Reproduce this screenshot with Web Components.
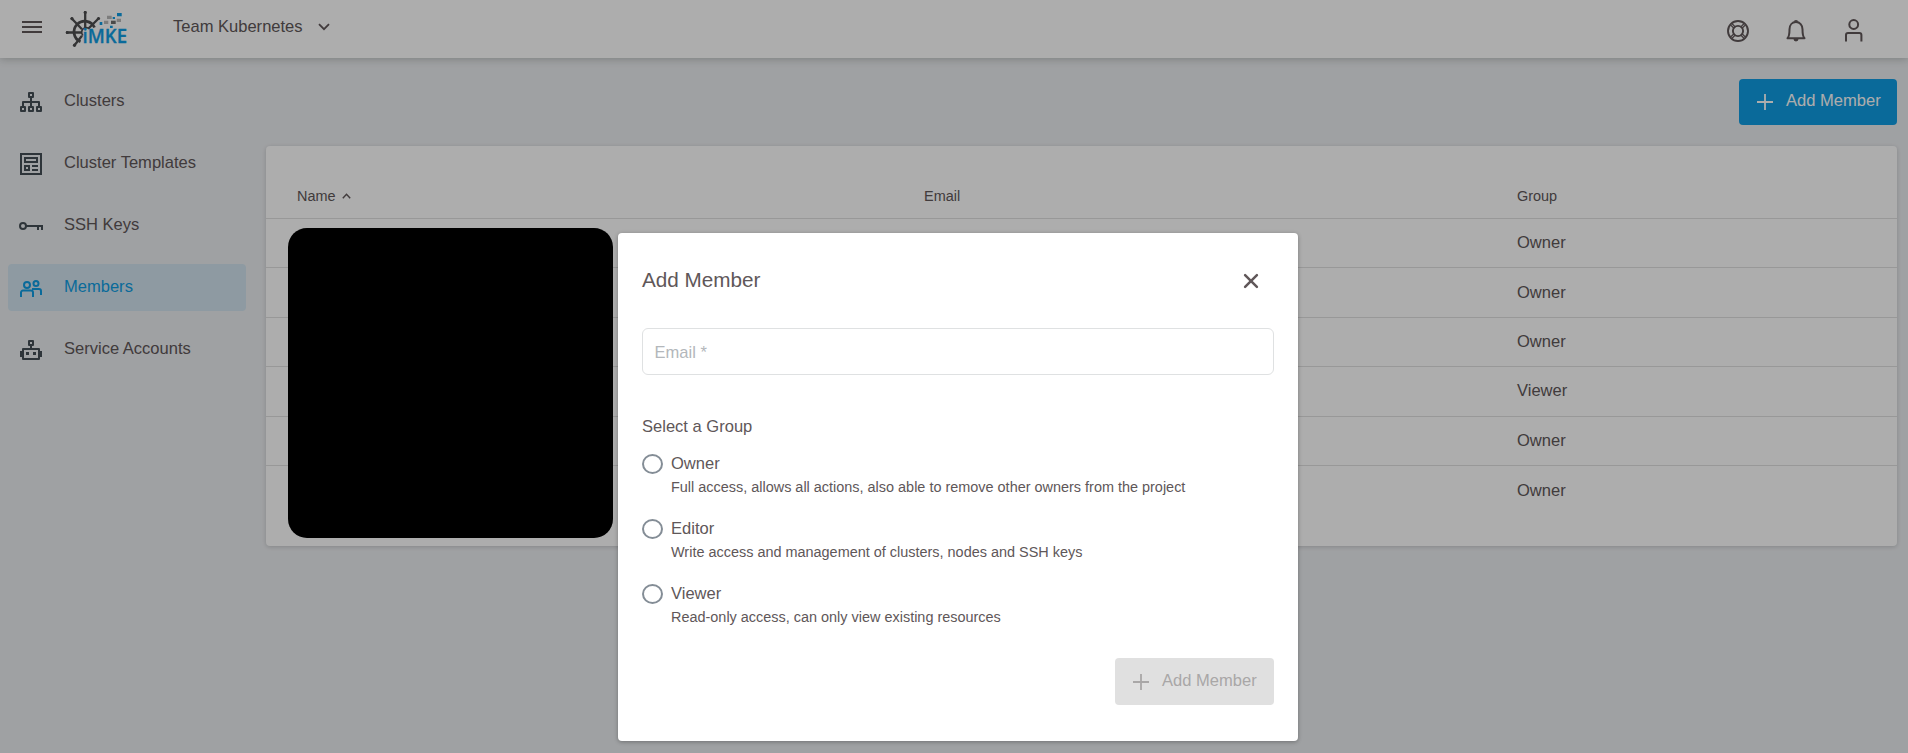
<!DOCTYPE html>
<html lang="en"><head><meta charset="utf-8"><title>Members</title>
<style>
html,body{margin:0;height:100%}
body{font:16.550px/20px "Liberation Sans",Arial,sans-serif;color:#605759;overflow:hidden;--blue:#0f9de3}
</style></head><body>
<mke-app></mke-app>
<script>
const define=(name,html,setup)=>{
  const t=document.createElement('template');t.innerHTML=html;
  customElements.define(name,class extends HTMLElement{
    constructor(){super();this.attachShadow({mode:'open'}).append(t.content.cloneNode(true));}
    connectedCallback(){if(setup)setup(this,this.shadowRoot);}
  });
};
const svg=(w,h,body)=>`<svg width="${w}" height="${h}" viewBox="0 0 ${w} ${h}" fill="none" stroke="currentColor" stroke-width="2">${body}</svg>`;
const icons={
  menu:svg(20,12,'<path d="M0 1h20M0 6h20M0 11h20"/>'),
  down:svg(12,8,'<path d="M1 1.2l5 5 5-5" stroke-width="1.8"/>'),
  up:svg(9,6,'<path d="M.8 5.2l3.7-4 3.7 4" stroke-width="1.4"/>'),
  plus:svg(16,16,'<path d="M8 0v16M0 8h16" stroke-width="1.8"/>'),
  close:svg(16,16,'<path d="M2.1 2.1l11.8 11.8M13.9 2.1L2.1 13.9" stroke-width="2.5" stroke-linecap="round"/>'),
  help:svg(22,22,'<g stroke-width="1.9"><circle cx="11" cy="11" r="10"/><circle cx="11" cy="11" r="5.1"/><path d="M3.8 5.1l3.1 3.1M5.1 3.8l3.1 3.1M18.2 5.1l-3.1 3.1M16.9 3.8l-3.1 3.1M3.8 16.9l3.1-3.1M5.1 18.2l3.1-3.1M18.2 16.9l-3.1-3.1M16.9 18.2l-3.1-3.1" stroke-width="1.3"/></g>'),
  bell:svg(20,22,'<path d="M1.500 18.300h17c-1.800-1.800-2-4-2-9C16.500 5 13.800 2.100 10 2.100S3.500 5 3.500 9.300c0 5-.2 7.200-2 9z" stroke-width="2" stroke-linejoin="round"/><path d="M7.800 1.700a2.200 1.700 0 014.400 0zM7.500 19a2.500 2.400 0 005 0z" fill="currentColor" stroke="none"/>'),
  user:svg(18,23,'<circle cx="8.700" cy="5.500" r="4.400"/><path d="M1 22.500v-6.500a2 2 0 012-2h11.400a2 2 0 012 2v6.500"/>'),
  clusters:svg(22,20,'<path d="M9 1h4v4H9zM1 15h4v4H1zM9 15h4v4H9zM17 15h4v4h-4zM11 5v10M3 15v-5h16v5" stroke-linejoin="round"/>'),
  templates:svg(22,22,'<path d="M1 1h20v20H1zM5 5h12v4H5zM5 13h4v4H5zM12 13h6M12 17h6"/>'),
  keys:svg(24,8,'<circle cx="4" cy="4" r="3"/><path d="M7 4h17M23 4v4M19 4v4"/>'),
  members:svg(22,17,'<circle cx="7" cy="5" r="3"/><circle cx="16" cy="3.500" r="2.500"/><path d="M1 17v-4.500a2 2 0 012-2h8a2 2 0 012 2V17M12 9h7a2 2 0 012 2v4"/>'),
  accounts:svg(22,20,'<path d="M9 1h4v4H9zM11 5v4M3 9h16v10H3z" stroke-linejoin="round"/><path d="M1.500 11v6M20.500 11v6" stroke-width="3"/><path d="M6 12h3v3H6zM13 12h3v3h-3z" fill="currentColor" stroke="none"/>')
};
define('mke-icon','<style>:host{display:flex;flex:none;align-items:center;justify-content:center}svg{display:block}</style><span></span>',(e,r)=>r.querySelector('span').innerHTML=icons[e.getAttribute('name')]);

define('mke-logo',`<style>:host{display:block}svg{display:block}text{font:600 19px "Open Sans","Noto Sans",sans-serif}</style>
<svg width="64" height="38" viewBox="65 10 64 38">
<g fill="none" stroke="#4d4d4f" stroke-width="2.600"><path d="M80.500 41.700A10.700 10.700 0 1 1 94.500 27.500" stroke-width="2.800"/><path d="M83 35.500A4.500 4.500 0 1 1 89.500 29" stroke-width="1.700"/>
<path d="M85.200 11v17M71 17.700l11 11.500M66 32.500h15M73.700 46.200l8.300-10.500M99.300 17.700L88.500 28.500" stroke-width="2.300"/></g>
<g fill="#4d4d4f"><circle cx="85.200" cy="12.500" r="1.600"/><circle cx="72" cy="18.700" r="1.600"/><circle cx="67.300" cy="32.500" r="1.600"/><circle cx="74.500" cy="45.200" r="1.600"/><circle cx="98.500" cy="18.500" r="1.600"/></g>
<g fill="#0f9de3"><path d="M117 13h4.700v3.300H117zM112.700 17h2.300v2h-2.300zM99.700 22h2.600v3h-2.600zM110 25.700h2.700v2.300H110z"/></g>
<path fill="#b8b8b8" d="M107 15.700h4.700V19H107zM116.700 18.700h4.300V22h-4.300zM104 20.700h4.300V24H104z"/><path fill="#6d6d6d" d="M111 20.700h4.700V24H111z"/>
<text x="82.500" y="43" textLength="44.500" lengthAdjust="spacingAndGlyphs" fill="#0f9de3" stroke="#0f9de3" stroke-width=".3">iMKE</text></svg>`);

define('mke-header',`<style>:host{display:flex;position:relative;z-index:1;box-sizing:border-box;height:58px;padding:0 45px 0 22px;background:#fff;box-shadow:0 1px 8px rgba(60,70,60,.3)}
.menu{margin:-4px 23px 0 0}mke-logo{margin:10px 44px 0 0}.project{margin:17px 15px 0 0;line-height:20px}.down{height:8px;margin-top:23px}
nav{display:flex;margin-left:auto;height:22px;margin-top:20px}.bell{margin:0 39px 0 37px}.user{margin-top:-1px}</style>
<mke-icon class="menu" name="menu"></mke-icon><mke-logo></mke-logo><span class="project">Team Kubernetes</span><mke-icon class="down" name="down"></mke-icon>
<nav><mke-icon name="help"></mke-icon><mke-icon class="bell" name="bell"></mke-icon><mke-icon class="user" name="user"></mke-icon></nav>`);

define('mke-nav-item',`<style>:host{display:flex;align-items:center;box-sizing:border-box;height:47px;padding-left:9px;border-radius:4px}
mke-icon{width:28px;margin-right:19px;padding-top:1px;color:#454f56}span{padding-bottom:1.800px}
:host([active]){background:#d1e4ef;color:var(--blue)}:host([active]) mke-icon{color:var(--blue)}</style>
<mke-icon></mke-icon><span><slot></slot></span>`,(e,r)=>{
  const i=document.createElement('mke-icon');i.setAttribute('name',e.getAttribute('icon'));r.querySelector('mke-icon').replaceWith(i);});

define('mke-sidebar',`<style>:host{display:flex;flex-direction:column;gap:15px;box-sizing:border-box;width:246px;padding:20px 0 0 8px}</style>
<mke-nav-item icon="clusters">Clusters</mke-nav-item><mke-nav-item icon="templates">Cluster Templates</mke-nav-item><mke-nav-item icon="keys">SSH Keys</mke-nav-item><mke-nav-item icon="members" active>Members</mke-nav-item><mke-nav-item icon="accounts">Service Accounts</mke-nav-item>`);

define('mke-button',`<style>:host{display:flex;align-items:center;box-sizing:border-box;width:158px;height:46px;padding-left:18px;border-radius:4px;background:var(--blue);color:#fff}
mke-icon{margin:0 13px 0 0}span{padding-bottom:2.800px;white-space:nowrap}
:host([disabled]){background:#e0e0e0;color:#a9a7a7;width:159px;height:47px}:host([disabled]) mke-icon{padding-top:1px}:host([disabled]) span{padding-bottom:1.800px}</style>
<mke-icon name="plus"></mke-icon><span><slot></slot></span>`);

define('mke-row',`<style>:host{display:grid;grid-template-columns:627px 593px 1fr;align-items:center;box-sizing:border-box;height:49.400px;padding-left:31px;border-bottom:1px solid #e0e0e0}
:host([head]){height:73px;padding-top:28px;font-size:14.450px}:host([last]){border:0}::slotted(*){display:flex;align-items:center;gap:6px}</style>
<slot name="name"></slot><slot name="email"></slot><slot name="group"></slot>`);

define('mke-table',`<style>:host{display:block;position:relative;box-sizing:border-box;height:400px;background:#fff;border-radius:4px;box-shadow:0 1px 4px rgba(0,0,0,.16)}
.mask{position:absolute;left:22px;top:82px;width:325px;height:310px;border-radius:19px;background:#000}</style>
<mke-row head><span slot="name">Name <mke-icon name="up"></mke-icon></span><span slot="email">Email</span><span slot="group">Group</span></mke-row>
${['Owner','Owner','Owner','Viewer','Owner','Owner'].map((g,i)=>`<mke-row ${i==5?'last':''}><span slot="name"></span><span slot="email"></span><span slot="group">${g}</span></mke-row>`).join('')}
<div class="mask"></div>`);

define('mke-radio',`<style>:host{display:grid;grid-template-columns:21px 1fr;column-gap:8px;height:65px;align-content:start}
i{box-sizing:border-box;width:21px;height:20px;border:2px solid #848d96;border-radius:50%;margin-top:1px}
b{font-weight:400;padding-top:1px}p{grid-column:2;margin:4px 0 0;font-size:14.450px;line-height:18px}</style>
<i></i><b><slot></slot></b><p><slot name="hint"></slot></p>`);

define('mke-dialog',`<style>:host{display:block;box-sizing:border-box;width:680px;height:508px;padding:36px 24px 0;background:#fff;border-radius:4px;box-shadow:0 1px 4px rgba(0,0,0,.3)}
header{display:flex;justify-content:space-between;align-items:center;padding-right:15px;font-size:20.700px;line-height:22px;height:22px}header mke-icon{padding-top:2px}
.field{box-sizing:border-box;height:47px;margin-top:37px;border:1px solid #dfe1e2;border-radius:6px;padding:13.800px 11.500px;color:#b3b7bb}
.group{margin:42px 0 16px}footer{display:flex;justify-content:flex-end;margin-top:10px}</style>
<header><span>Add Member</span><mke-icon name="close"></mke-icon></header><div class="field">Email *</div>
<div class="group">Select a Group</div>
<mke-radio>Owner<span slot="hint">Full access, allows all actions, also able to remove other owners from the project</span></mke-radio>
<mke-radio>Editor<span slot="hint">Write access and management of clusters, nodes and SSH keys</span></mke-radio>
<mke-radio>Viewer<span slot="hint">Read-only access, can only view existing resources</span></mke-radio>
<footer><mke-button disabled>Add Member</mke-button></footer>`);

define('mke-app',`<style>:host{display:block;position:relative;height:753px;background:#ebedf0;overflow:hidden}
.body{display:flex}main{flex:1;padding:21px 11px 0 20px}.actions{display:flex;justify-content:flex-end;margin-bottom:21px}
.overlay{position:absolute;inset:0;z-index:2;display:flex;justify-content:center;align-items:flex-start;padding:233px 0 0 8px;background:rgba(0,0,0,.32)}</style>
<mke-header></mke-header><div class="body"><mke-sidebar></mke-sidebar><main><div class="actions"><mke-button>Add Member</mke-button></div><mke-table></mke-table></main></div>
<div class="overlay"><mke-dialog></mke-dialog></div>`);
</script></body></html>
